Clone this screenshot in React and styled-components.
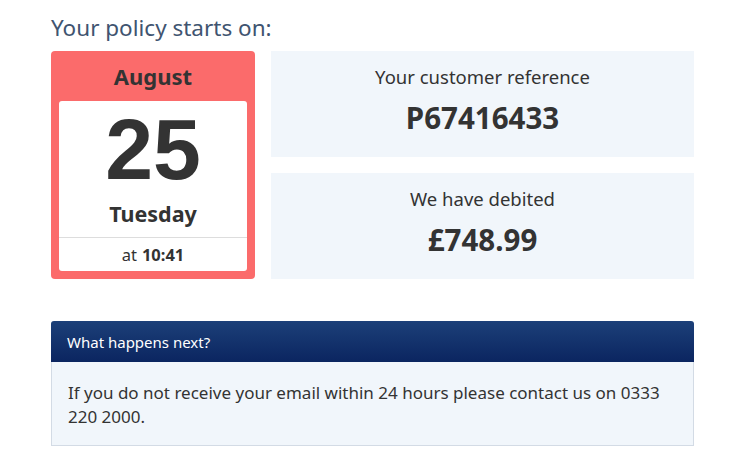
import React from "react"
import styled, { createGlobalStyle } from "styled-components"

const GlobalStyle = createGlobalStyle`
  body {
    margin: 0;
    background: #fff;
    font-family: "Noto Sans", "Open Sans", sans-serif;
    color: #333;
  }
`

const Page = styled.div`
  width: 643px;
  padding: 12px 0 0 51px;
`

const Title = styled.h2`
  margin: 0 0 8px;
  font-size: 22.5px;
  font-weight: 400;
  line-height: 31px;
  color: #405470;
`

const TopRow = styled.div`
  display: grid;
  grid-template-columns: 204px 1fr;
  gap: 16px;
`

const Calendar = styled.div`
  background: #fb6b6b;
  border-radius: 4px;
  padding: 0 8px 8px;
  display: flex;
  flex-direction: column;
`

const Month = styled.div`
  height: 50px;
  display: flex;
  align-items: center;
  justify-content: center;
  font-size: 22px;
  font-weight: 700;
  color: #333;
`

const CalendarCard = styled.div`
  background: #fff;
  border-radius: 3px;
  display: flex;
  flex-direction: column;
  align-items: center;
`

const Day = styled.div`
  font-family: "Liberation Sans", Arial, sans-serif;
  font-size: 86px;
  font-weight: 700;
  line-height: 92px;
  margin-top: 2px;
  color: #333;
`

const Weekday = styled.div`
  font-size: 21.5px;
  font-weight: 700;
  line-height: 28px;
  margin: 5px 0 9px;
  color: #333;
`

const Time = styled.div`
  align-self: stretch;
  border-top: 1px solid #ddd;
  height: 33px;
  display: flex;
  align-items: center;
  justify-content: center;
  font-size: 16.5px;
  color: #333;

  b {
    margin-left: 5px;
  }
`

const InfoColumn = styled.div`
  display: flex;
  flex-direction: column;
  gap: 16px;
`

const InfoBox = styled.div`
  background: #f1f6fb;
  height: 106px;
  display: flex;
  flex-direction: column;
  align-items: center;
  padding-top: 14px;
  box-sizing: border-box;
`

const InfoLabel = styled.div`
  font-size: 18.5px;
  line-height: 24px;
  color: #333;
`

const InfoValue = styled.div`
  font-size: 29.5px;
  font-weight: 700;
  line-height: 36px;
  margin-top: 11px;
  color: #333;
`

const Panel = styled.div`
  margin-top: 42px;
`

const PanelHeader = styled.div`
  background: linear-gradient(#1c4079, #0b2560);
  border-radius: 3px 3px 0 0;
  height: 41px;
  display: flex;
  align-items: center;
  padding-left: 16px;
  font-size: 15px;
  color: #fff;
`

const PanelBody = styled.div`
  background: #f1f6fb;
  border: 1px solid #d3dbe5;
  border-top: none;
  padding: 19px 16px 16px;
  font-size: 17px;
  line-height: 24px;
  color: #333;
`

export default function App() {
  return (
    <>
      <GlobalStyle />
      <Page>
        <Title>Your policy starts on:</Title>
        <TopRow>
          <Calendar>
            <Month>August</Month>
            <CalendarCard>
              <Day>25</Day>
              <Weekday>Tuesday</Weekday>
              <Time>
                at <b>10:41</b>
              </Time>
            </CalendarCard>
          </Calendar>
          <InfoColumn>
            <InfoBox>
              <InfoLabel>Your customer reference</InfoLabel>
              <InfoValue>P67416433</InfoValue>
            </InfoBox>
            <InfoBox>
              <InfoLabel>We have debited</InfoLabel>
              <InfoValue>£748.99</InfoValue>
            </InfoBox>
          </InfoColumn>
        </TopRow>
        <Panel>
          <PanelHeader>What happens next?</PanelHeader>
          <PanelBody>
            If you do not receive your email within 24 hours please contact us on 0333 220 2000.
          </PanelBody>
        </Panel>
      </Page>
    </>
  )
}
